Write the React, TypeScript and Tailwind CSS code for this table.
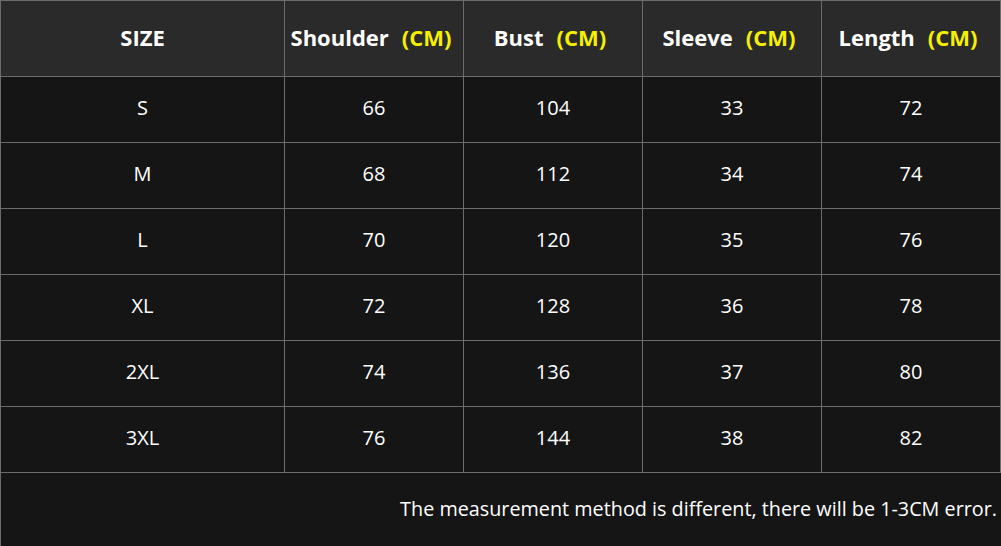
const headers = [
  { label: "SIZE", unit: false },
  { label: "Shoulder", unit: true },
  { label: "Bust", unit: true },
  { label: "Sleeve", unit: true },
  { label: "Length", unit: true },
];

const rows = [
  ["S", 66, 104, 33, 72],
  ["M", 68, 112, 34, 74],
  ["L", 70, 120, 35, 76],
  ["XL", 72, 128, 36, 78],
  ["2XL", 74, 136, 37, 80],
  ["3XL", 76, 144, 38, 82],
];

export default function App() {
  return (
    <div
      className="w-[1001px] h-[546px] bg-[#151515] text-white overflow-hidden"
      style={{ fontFamily: '"Open Sans", "Noto Sans", sans-serif' }}
    >
      <div className="grid grid-cols-[284px_179px_179px_179px_179px] border-l border-t border-[#6c6c6c]">
        {/* cabecera */}
        {headers.map((h) => (
          <div
            key={h.label}
            className="h-[76px] pb-[2px] pr-[6px] first:pr-0 flex items-center justify-center bg-[#2a2a2a] border-r border-b border-[#6c6c6c] text-[22px] font-bold"
          >
            {h.label}
            {h.unit && <span className="ml-[13px] text-[#f5f000]">(CM)</span>}
          </div>
        ))}

        {/* filas */}
        {rows.map((r) =>
          r.map((v, i) => (
            <div
              key={`${r[0]}-${i}`}
              className="h-[66px] pb-[3px] flex items-center justify-center border-r border-b border-[#6c6c6c] text-[20px]"
            >
              {v}
            </div>
          ))
        )}
      </div>

      {/* nota */}
      <div className="h-[73px] pb-[2px] border-l border-[#6c6c6c] flex items-center justify-end pr-[4px] text-[19.8px]">
        The measurement method is different, there will be 1-3CM error.
      </div>
    </div>
  );
}
